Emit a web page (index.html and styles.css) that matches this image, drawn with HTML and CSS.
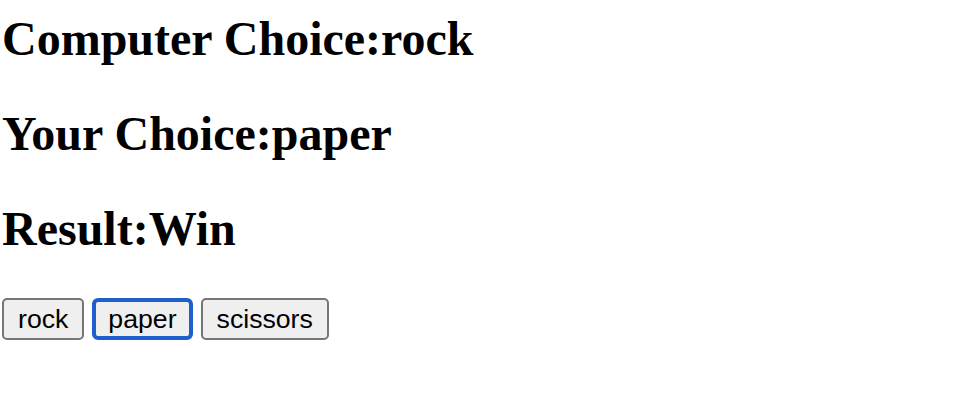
FILE: index.html
```html
<!DOCTYPE html>
<html lang="en">
<head>
<meta charset="utf-8">
<title>Rock Paper Scissors</title>
<link rel="stylesheet" href="styles.css">
</head>
<body>
<div class="page">
  <h2 class="line">Computer Choice:rock</h2>
  <h2 class="line">Your Choice:paper</h2>
  <h2 class="line">Result:Win</h2>
  <div class="choices">
    <button class="choice">rock</button>
    <button class="choice choice--focused">paper</button>
    <button class="choice">scissors</button>
  </div>
</div>
</body>
</html>
```
FILE: styles.css
```css
html, body {
  margin: 0;
  background: #ffffff;
}

.page {
  padding: 11px 0 0 2px;
}

.line {
  margin: 0 0 40px 0;
  font-family: "Liberation Serif", "Times New Roman", serif;
  font-weight: 700;
  font-size: 48px;
  line-height: 55px;
  color: #000000;
}

.choices {
  display: flex;
  gap: 8px;
  padding-top: 2px;
}

.choice {
  box-sizing: border-box;
  height: 42px;
  margin: 0;
  padding: 0 14px;
  border: 2px solid #767676;
  border-radius: 5px;
  background: #efefef;
  font-family: "Liberation Sans", Arial, sans-serif;
  font-size: 26.67px;
  line-height: 30px;
  color: #000000;
}

.choice--focused {
  border: 4px solid #1f5fcb;
  padding: 0 12px;
  border-radius: 6px;
  outline: none;
}
```
